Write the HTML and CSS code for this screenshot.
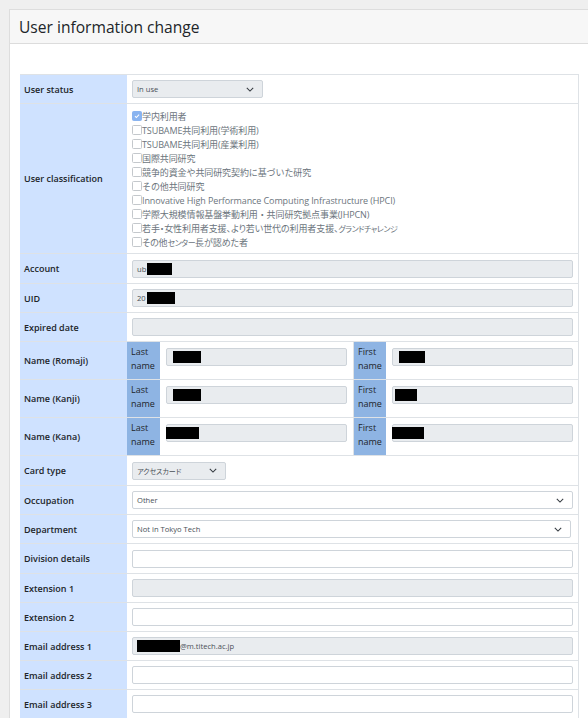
FILE: index.html
```html
<!DOCTYPE html>
<html lang="en">
<head>
<meta charset="utf-8">
<title>User information change</title>
<link rel="stylesheet" href="styles.css">
</head>
<body>
<div class="card">
  <div class="card-header"><h1>User information change</h1></div>
  <div class="card-body">
    <table class="info">
      <tr class="row">
        <th>User status</th>
        <td><div class="field disabled select w-status"><span>In use</span><svg class="chev" viewBox="0 0 10 6"><path d="M1 1l4 4 4-4"/></svg></div></td>
      </tr>
      <tr class="row">
        <th>User classification</th>
        <td class="checks">
          <div class="chk"><span class="box checked"><svg viewBox="0 0 10 10"><path d="M2.5 5.2l1.7 1.7 3.4-3.6"/></svg></span>学内利用者</div>
          <div class="chk"><span class="box"></span>TSUBAME共同利用(学術利用)</div>
          <div class="chk"><span class="box"></span>TSUBAME共同利用(産業利用)</div>
          <div class="chk"><span class="box"></span>国際共同研究</div>
          <div class="chk"><span class="box"></span>競争的資金や共同研究契約に基づいた研究</div>
          <div class="chk"><span class="box"></span>その他共同研究</div>
          <div class="chk"><span class="box"></span>Innovative High Performance Computing Infrastructure (HPCI)</div>
          <div class="chk"><span class="box"></span>学際大規模情報基盤挙動利用・共同研究拠点事業(JHPCN)</div>
          <div class="chk palt"><span class="box"></span>若手・女性利用者支援、より若い世代の利用者支援、<span class="narrow">グランドチャレンジ</span></div>
          <div class="chk palt"><span class="box"></span>その他<span class="narrow">センター</span>長が認めた者</div>
        </td>
      </tr>
      <tr class="row tall">
        <th>Account</th>
        <td><div class="field disabled"><span>ub</span><span class="redact r-acc"></span></div></td>
      </tr>
      <tr class="row">
        <th>UID</th>
        <td><div class="field disabled"><span>20</span><span class="redact r-uid"></span></div></td>
      </tr>
      <tr class="row">
        <th>Expired date</th>
        <td><div class="field disabled"></div></td>
      </tr>
      <tr class="row name">
        <th>Name (Romaji)</th>
        <td class="split">
          <div class="names">
            <div class="sub">Last<br>name</div>
            <div class="cell"><div class="field disabled"><span class="redact r-rl"></span></div></div>
            <div class="sub first">First<br>name</div>
            <div class="cell last"><div class="field disabled"><span class="redact r-rf"></span></div></div>
          </div>
        </td>
      </tr>
      <tr class="row name">
        <th>Name (Kanji)</th>
        <td class="split">
          <div class="names">
            <div class="sub">Last<br>name</div>
            <div class="cell"><div class="field disabled"><span class="redact r-kl"></span></div></div>
            <div class="sub first">First<br>name</div>
            <div class="cell last"><div class="field disabled"><span class="redact r-kf"></span></div></div>
          </div>
        </td>
      </tr>
      <tr class="row name">
        <th>Name (Kana)</th>
        <td class="split">
          <div class="names">
            <div class="sub">Last<br>name</div>
            <div class="cell"><div class="field disabled tight"><span class="redact r-nl"></span></div></div>
            <div class="sub first">First<br>name</div>
            <div class="cell last"><div class="field disabled tight"><span class="redact r-nf"></span></div></div>
          </div>
        </td>
      </tr>
      <tr class="row tall">
        <th>Card type</th>
        <td><div class="field disabled select w-card"><span class="jp">アクセスカード</span><svg class="chev" viewBox="0 0 10 6"><path d="M1 1l4 4 4-4"/></svg></div></td>
      </tr>
      <tr class="row">
        <th>Occupation</th>
        <td><div class="field select"><span>Other</span><svg class="chev" viewBox="0 0 10 6"><path d="M1 1l4 4 4-4"/></svg></div></td>
      </tr>
      <tr class="row">
        <th>Department</th>
        <td><div class="field select w-dept"><span>Not in Tokyo Tech</span><svg class="chev" viewBox="0 0 10 6"><path d="M1 1l4 4 4-4"/></svg></div></td>
      </tr>
      <tr class="row tall">
        <th>Division details</th>
        <td><div class="field"></div></td>
      </tr>
      <tr class="row">
        <th>Extension 1</th>
        <td><div class="field disabled"></div></td>
      </tr>
      <tr class="row">
        <th>Extension 2</th>
        <td><div class="field"></div></td>
      </tr>
      <tr class="row">
        <th>Email address 1</th>
        <td><div class="field disabled"><span class="redact r-mail"></span><span>@m.titech.ac.jp</span></div></td>
      </tr>
      <tr class="row">
        <th>Email address 2</th>
        <td><div class="field"></div></td>
      </tr>
      <tr class="row">
        <th>Email address 3</th>
        <td><div class="field"></div></td>
      </tr>
    </table>
  </div>
</div>
</body>
</html>
```

FILE: styles.css
```css
html, body {
  margin: 0;
  padding: 0;
  overflow: hidden;
  background: #efefef;
}
body {
  font-family: "Open Sans", "Noto Sans", "Noto Sans CJK JP", sans-serif;
  color: #212529;
  padding: 9px 0 0 9px;
}
.card {
  width: 600px;
  background: #fff;
  border: 1px solid #dddddd;
  border-right: none;
}
.card-header {
  height: 33px;
  background: #f7f7f7;
  border-bottom: 1px solid #dcdcdc;
  display: flex;
  align-items: center;
  padding-left: 9px;
}
.card-header h1 {
  margin: 0;
  font-size: 15.6px;
  font-weight: 500;
  color: #212529;
}
.card-body {
  padding: 30px 10px 0 10px;
}
.info {
  width: 559px;
  border-collapse: collapse;
  table-layout: fixed;
}
.info th {
  width: 103px;
  background: #cfe2ff;
  text-align: left;
  font-weight: 600;
  font-size: 9px;
  padding: 0 0 0 4px;
  border-bottom: 1px solid #dee2e6;
  border-top: 1px solid #dee2e6;
  color: #212529;
}
.info td {
  padding: 5px;
  border: 1px solid #dee2e6;
  border-left: none;
  height: 18px;
}
.info .tall td {
  height: 19px;
}
.field {
  height: 16px;
  border: 1px solid #ced4da;
  border-radius: 2px;
  background: #fff;
  display: flex;
  align-items: center;
  padding: 0 4px;
  font-size: 7.6px;
  color: #495057;
  box-sizing: content-box;
}
.field.disabled {
  background: #e9ecef;
}
.field.select {
  justify-content: space-between;
  padding-right: 8px;
}
.w-status { width: 117px; }
.w-card { width: 80px; }
.w-dept { margin-right: 2px; }
.jp {
  font-family: "Noto Sans CJK JP", sans-serif;
  font-size: 7px;
  letter-spacing: -0.6px;
}
.chev {
  width: 8px;
  height: 5px;
  fill: none;
  stroke: #343a40;
  stroke-width: 1.3;
}
.redact {
  display: inline-block;
  background: #000;
  height: 12px;
}
.r-acc { width: 25px; margin-left: 1px; }
.r-uid { width: 28px; margin-left: 1px; }
.r-rl { width: 28px; margin-left: 2px; }
.r-rf { width: 26px; margin-left: 2px; }
.r-kl { width: 28px; margin-left: 2px; }
.r-kf { width: 22px; margin-left: -2px; }
.r-nl { width: 33px; margin-left: -2px; }
.r-nf { width: 32px; margin-left: -2px; }
.r-mail { width: 43px; margin-left: 0; }

.info td.checks {
  padding: 5px 5px 4px 5px;
  height: auto;
}
.chk {
  display: flex;
  align-items: center;
  height: 14px;
  font-size: 9px;
  color: #6c757d;
  font-family: "Open Sans", "Noto Sans CJK JP", sans-serif;
  white-space: nowrap;
  letter-spacing: -0.1px;
}
.chk.palt {
  font-feature-settings: "palt" 1;
}
.narrow {
  font-size: 8px;
  letter-spacing: -0.5px;
}
.box {
  width: 8px;
  height: 8px;
  border: 1px solid #c4c8cc;
  border-radius: 1.5px;
  background: #fff;
  margin-right: 0;
  flex: none;
  display: flex;
}
.box.checked {
  background: #8ab4f0;
  border-color: #8ab4f0;
}
.box svg {
  width: 8px;
  height: 8px;
  fill: none;
  stroke: #fff;
  stroke-width: 1.3;
}

.info td.split {
  padding: 0;
  height: 37px;
}
.names {
  display: flex;
  height: 37px;
}
.sub {
  width: 29px;
  background: #8eb4e3;
  font-size: 9px;
  line-height: 14px;
  padding: 3px 0 0 4px;
  color: #212529;
  flex: none;
}
.sub.first {
  border-left: 1px solid #dee2e6;
  width: 28px;
}
.cell {
  flex: 1;
  padding: 6px 6px 0 6px;
}
.cell.last {
  padding-right: 5px;
}
.cell .field.tight { padding-left: 1px; }
```
